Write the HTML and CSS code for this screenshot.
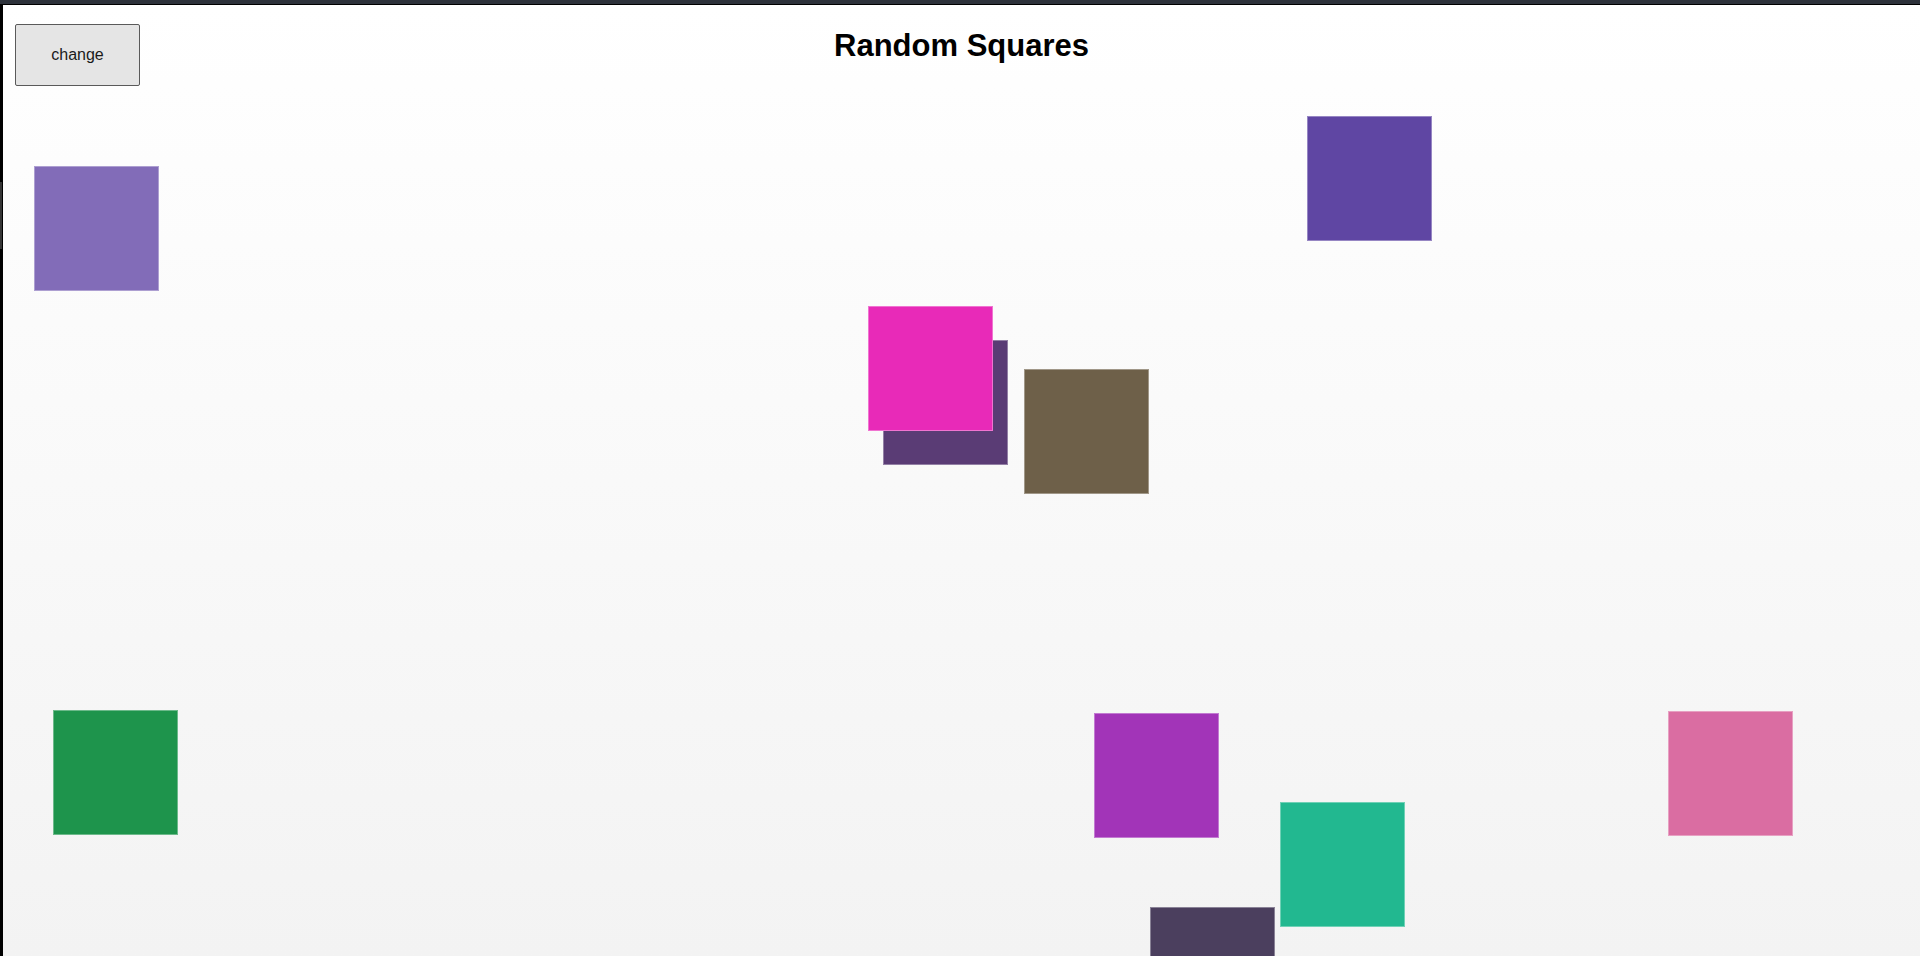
FILE: index.html
```html
<!DOCTYPE html>
<html lang="en">
<head>
<meta charset="utf-8">
<title>Random Squares</title>
<link rel="stylesheet" href="styles.css">
</head>
<body>
<div class="topbar"></div>
<div class="frame">
  <span class="edge-mark"></span>
  <main class="canvas">
    <header class="header">
      <div class="header-left"><button class="change-btn" type="button">change</button></div>
      <h1 class="title">Random Squares</h1>
      <div class="header-right"></div>
    </header>
    <div class="square" style="left:31px;top:161px;background:#826cb8"></div>
    <div class="square" style="left:1304px;top:111px;background:#5f46a3"></div>
    <div class="square" style="left:880px;top:335px;background:#5a3c75"></div>
    <div class="square" style="left:865px;top:301px;background:#e82ab8"></div>
    <div class="square" style="left:1021px;top:364px;background:#6e6049"></div>
    <div class="square" style="left:50px;top:705px;background:#1e944c"></div>
    <div class="square" style="left:1091px;top:708px;background:#a234b8"></div>
    <div class="square" style="left:1277px;top:797px;background:#22b890"></div>
    <div class="square" style="left:1147px;top:902px;background:#4b3f5e"></div>
    <div class="square" style="left:1665px;top:706px;background:#da6da2"></div>
  </main>
</div>
</body>
</html>
```
FILE: styles.css
```css
html, body {
  margin: 0;
  padding: 0;
  height: 100%;
  overflow: hidden;
  background: #000;
  font-family: "Liberation Sans", Arial, sans-serif;
}

.topbar {
  height: 4px;
  background: #2d323b;
  border-bottom: 1px solid #000;
}

.frame {
  position: relative;
  height: calc(100% - 5px);
  padding-left: 3px;
  background: #000;
}

.edge-mark {
  position: absolute;
  left: 0;
  top: 177px;
  width: 2px;
  height: 67px;
  background: #353535;
}

.canvas {
  position: relative;
  height: 100%;
  overflow: hidden;
  background: linear-gradient(to bottom, #ffffff 0%, #f3f3f3 100%);
}

.header {
  display: grid;
  grid-template-columns: 1fr auto 1fr;
  align-items: start;
}

.header-left {
  padding: 19px 0 0 12px;
}

.change-btn {
  width: 125px;
  height: 62px;
  background: #e5e5e5;
  border: 1px solid #5a5a5a;
  border-radius: 2px;
  color: #1a1a1a;
  font-family: "Liberation Sans", Arial, sans-serif;
  font-size: 16px;
  padding: 0;
}

.title {
  margin: 23px 0 0;
  font-size: 31px;
  font-weight: bold;
  color: #000;
  text-align: center;
}

.square {
  position: absolute;
  width: 125px;
  height: 125px;
  box-sizing: border-box;
  border: 1px solid rgba(255, 255, 255, 0.35);
}
```
